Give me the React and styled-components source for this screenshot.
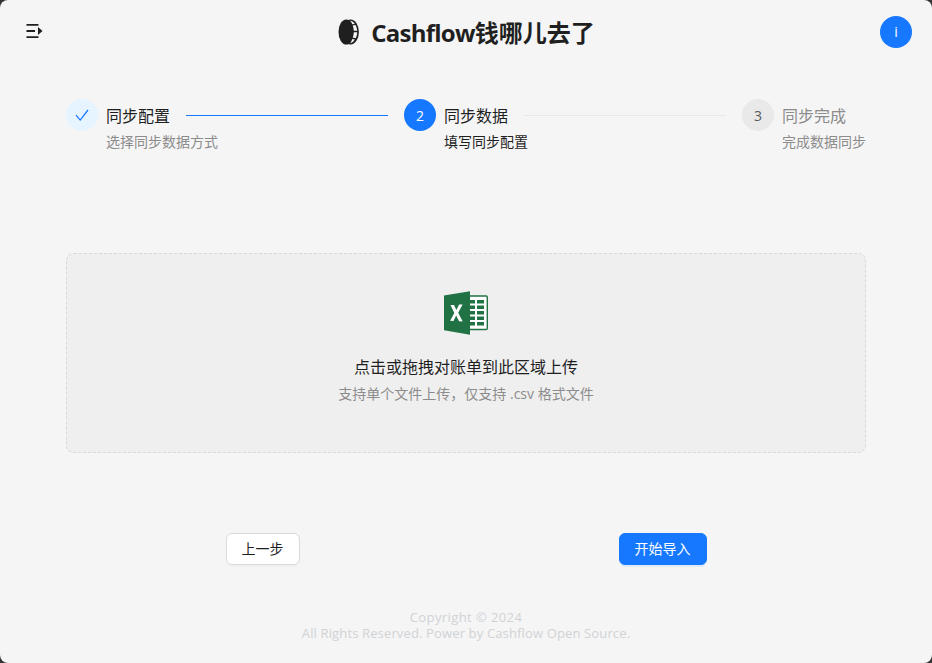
import React from "react";
import styled, { createGlobalStyle } from "styled-components";

const GlobalStyle = createGlobalStyle`
  * { box-sizing: border-box; }
  html, body { margin: 0; padding: 0; background: #333; }
  body {
    font-family: "Open Sans", "Noto Sans CJK SC", sans-serif;
    font-size: 14px;
    color: rgba(0, 0, 0, 0.88);
  }
`;

const Window = styled.div`
  display: flex;
  flex-direction: column;
  width: 932px;
  height: 663px;
  overflow: hidden;
  border-radius: 8px;
  background: #f5f5f5;
`;

const Header = styled.header`
  display: grid;
  grid-template-columns: 100px 1fr 100px;
  align-items: center;
  height: 64px;
  padding: 0 20px 0 26px;
`;

const MenuButton = styled.button`
  display: flex;
  width: 18px;
  height: 18px;
  padding: 0;
  border: 0;
  margin-top: -2px;
  background: none;
`;

const Brand = styled.h1`
  display: flex;
  align-items: center;
  justify-content: center;
  gap: 12px;
  height: 34px;
  margin: 0 5px 0 0;
  padding-top: 2px;
  font-size: 24px;
  line-height: 32px;
  font-weight: 700;
  color: #1f1f1f;
  white-space: nowrap;
  svg { flex: none; margin-top: -2px; }
`;

const Latin = styled.span`
  letter-spacing: -0.77px;
`;

const InfoButton = styled.button`
  justify-self: end;
  width: 32px;
  height: 32px;
  padding: 0;
  border: 0;
  border-radius: 50%;
  background: #1677ff;
  color: #fff;
  font: 14px/32px "Open Sans", sans-serif;
`;

const Steps = styled.ol`
  display: flex;
  gap: 16px;
  width: 800px;
  height: 54px;
  margin: 35px auto 0;
  padding: 0;
  list-style: none;
`;

const Step = styled.li`
  display: flex;
  gap: 8px;
  flex: ${(p) => (p.$last ? "0 0 124px" : "1 1 0")};
`;

const palette = {
  finish: { bg: "#e6f4ff", icon: "#1677ff", title: "#1f1f1f", text: "#8c8c8c" },
  process: { bg: "#1677ff", icon: "#fff", title: "#1f1f1f", text: "#1f1f1f" },
  wait: { bg: "#e9e9e9", icon: "#5a5a5a", title: "#8c8c8c", text: "#8c8c8c" },
};

const StepIcon = styled.span`
  display: flex;
  flex: none;
  align-items: center;
  justify-content: center;
  width: 32px;
  height: 32px;
  border-radius: 50%;
  background: ${(p) => palette[p.$status].bg};
  color: ${(p) => palette[p.$status].icon};
  padding-top: ${(p) => (p.$status === "finish" ? "0" : "1px")};
`;

const StepBody = styled.div`
  flex: 1;
  white-space: nowrap;
`;

const StepTitle = styled.div`
  display: flex;
  align-items: center;
  gap: 16px;
  height: 32px;
  font-size: 16px;
  line-height: 32px;
  color: ${(p) => palette[p.$status].title};
  span { padding-top: 1px; }
`;

const StepLine = styled.div`
  flex: 1;
  height: 1px;
  background-color: ${(p) => (p.$active ? "#1677ff" : "#e8e8e8")};
`;

const StepText = styled.div`
  font-size: 14px;
  line-height: 22px;
  color: ${(p) => palette[p.$status].text};
`;

const UploadArea = styled.section`
  display: flex;
  flex-direction: column;
  align-items: center;
  width: 800px;
  height: 200px;
  margin: 100px auto 0;
  padding-top: 37px;
  border: 1px dashed #d9d9d9;
  border-radius: 8px;
  background: #efefef;
`;

const UploadTitle = styled.p`
  margin: 20px 0 4px;
  font-size: 16px;
  line-height: 24px;
  color: #1f1f1f;
`;

const UploadHint = styled.p`
  margin: 0;
  font-size: 14px;
  line-height: 22px;
  color: #8c8c8c;
`;

const Actions = styled.div`
  display: flex;
  justify-content: space-between;
  width: 481px;
  margin: 80px 0 0 226px;
`;

const Button = styled.button`
  width: ${(p) => (p.$primary ? "88px" : "74px")};
  height: 32px;
  padding: 0 1px 0 0;
  border: 1px solid ${(p) => (p.$primary ? "#1677ff" : "#d9d9d9")};
  border-radius: 6px;
  background: ${(p) => (p.$primary ? "#1677ff" : "#fff")};
  box-shadow: 0 2px 0 ${(p) => (p.$primary ? "rgba(5,145,255,0.1)" : "rgba(0,0,0,0.02)")};
  color: ${(p) => (p.$primary ? "#fff" : "#1f1f1f")};
  font: 14px/22px "Open Sans", "Noto Sans CJK SC", sans-serif;
`;

const Footer = styled.footer`
  margin-top: 44px;
  text-align: center;
  font-size: 13px;
  color: #d0d3d6;
  white-space: nowrap;
`;

const FooterLine = styled.div`
  line-height: 16px;
  letter-spacing: ${(p) => p.$spacing};
`;

const MenuIcon = () => (
  <svg width="18" height="18" viewBox="0 0 18 18" fill="#1f1f1f">
    <path d="M.5 2h12v1.8H.5zM.5 8.1H9v1.8H.5zM.5 14.2h12V16H.5zM12 5l4.5 4-4.5 4z" />
  </svg>
);

const Logo = () => (
  <svg width="21" height="26" viewBox="0 0 21 26">
    <ellipse cx="12.6" cy="13" rx="8.3" ry="12.4" fill="#1f1f1f" />
    <ellipse cx="8.3" cy="13" rx="7.8" ry="12.6" fill="#1f1f1f" />
    <g fill="#f5f5f5">
      <path d="M11.8 1.6c1.8.3 3.7 1.4 5 3.3l-2.5.3c-.7-1.5-1.5-2.7-2.5-3.6z" />
      <path d="M14.7 6.4l2.8-.4c.9 1.6 1.5 3.5 1.7 5.8h-3.4c-.1-2-.5-3.8-1.1-5.4z" />
      <path d="M15.8 13.3h3.4c-.1 2.2-.6 4.2-1.4 5.8l-3-.4c.6-1.6.9-3.4 1-5.4z" />
      <path d="M14.3 20.1l2.6.5c-1.2 1.9-2.9 3.2-4.8 3.7.9-1 1.6-2.4 2.2-4.2z" />
    </g>
  </svg>
);

const CheckIcon = () => (
  <svg width="14" height="14" viewBox="0 0 14 14" fill="none" stroke="#1677ff" strokeWidth="1.25">
    <path d="M1 7.2l4.2 4.9L13 2" />
  </svg>
);

const ExcelIcon = () => (
  <svg width="44" height="44" viewBox="0 0 44 44">
    <rect x="22" y="5" width="21.3" height="33.5" rx="1.2" fill="#fff" stroke="#207245" strokeWidth="1.4" />
    <path
      fill="#207245"
      d="M26 9h5v3.6h-5zM33 9h7v3.6h-7zM26 14.5h5v3.6h-5zM33 14.5h7v3.6h-7zM26 20h5v3.6h-5zM33 20h7v3.6h-7zM26 25.5h5v3.6h-5zM33 25.5h7v3.6h-7zM26 31h5v3.6h-5zM33 31h7v3.6h-7z"
    />
    <path d="M0 4.6L26 .2v43.6L0 39.2z" fill="#207245" />
    <path d="M6.5 14.1l3.5-.2 2.4 5.2 2.7-5.5 3.5-.2-4.4 8.4 4.5 8.7-3.7-.2-2.8-5.8-2.7 5.4-3.4-.2 4.2-7.8z" fill="#fff" />
  </svg>
);

const STEPS = [
  { title: "同步配置", text: "选择同步数据方式", status: "finish" },
  { title: "同步数据", text: "填写同步配置", status: "process" },
  { title: "同步完成", text: "完成数据同步", status: "wait" },
];

export default function App() {
  return (
    <>
      <GlobalStyle />
      <Window>
        <Header>
          <MenuButton aria-label="menu"><MenuIcon /></MenuButton>
          <Brand>
            <Logo />
            <span><Latin>Cashflow</Latin>钱哪儿去了</span>
          </Brand>
          <InfoButton>i</InfoButton>
        </Header>
        <Steps>
          {STEPS.map((s, i) => {
            const last = i === STEPS.length - 1;
            return (
              <Step key={s.title} $last={last}>
                <StepIcon $status={s.status}>{s.status === "finish" ? <CheckIcon /> : i + 1}</StepIcon>
                <StepBody>
                  <StepTitle $status={s.status}>
                    <span>{s.title}</span>
                    {!last && <StepLine $active={s.status === "finish"} />}
                  </StepTitle>
                  <StepText $status={s.status}>{s.text}</StepText>
                </StepBody>
              </Step>
            );
          })}
        </Steps>
        <UploadArea>
          <ExcelIcon />
          <UploadTitle>点击或拖拽对账单到此区域上传</UploadTitle>
          <UploadHint>支持单个文件上传，仅支持 .csv 格式文件</UploadHint>
        </UploadArea>
        <Actions>
          <Button>上一步</Button>
          <Button $primary>开始导入</Button>
        </Actions>
        <Footer>
          <FooterLine $spacing="0.4px">Copyright © 2024</FooterLine>
          <FooterLine $spacing="0.14px">All Rights Reserved. Power by Cashflow Open Source.</FooterLine>
        </Footer>
      </Window>
    </>
  );
}
